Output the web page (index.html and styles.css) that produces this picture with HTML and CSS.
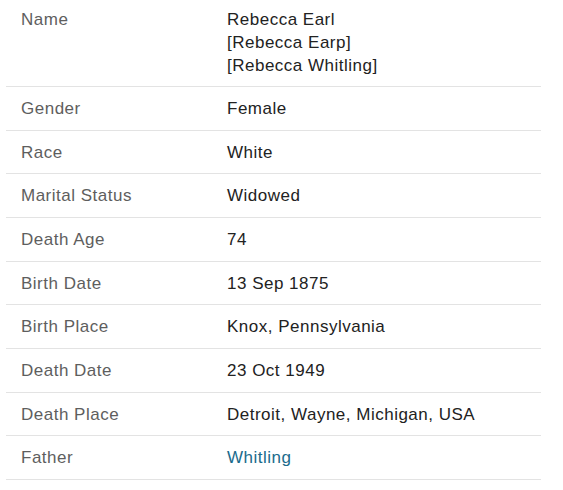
FILE: index.html
```html
<!DOCTYPE html>
<html>
<head>
<meta charset="utf-8">
<link rel="stylesheet" href="styles.css">
</head>
<body>
<div class="record">
  <div class="row row-first">
    <div class="label">Name</div>
    <div class="value">Rebecca Earl<br>[Rebecca Earp]<br>[Rebecca Whitling]</div>
  </div>
  <div class="row"><div class="label">Gender</div><div class="value">Female</div></div>
  <div class="row"><div class="label">Race</div><div class="value">White</div></div>
  <div class="row"><div class="label">Marital Status</div><div class="value">Widowed</div></div>
  <div class="row"><div class="label">Death Age</div><div class="value">74</div></div>
  <div class="row"><div class="label">Birth Date</div><div class="value">13 Sep 1875</div></div>
  <div class="row"><div class="label">Birth Place</div><div class="value">Knox, Pennsylvania</div></div>
  <div class="row"><div class="label">Death Date</div><div class="value">23 Oct 1949</div></div>
  <div class="row"><div class="label">Death Place</div><div class="value">Detroit, Wayne, Michigan, USA</div></div>
  <div class="row"><div class="label">Father</div><div class="value"><a class="link" href="#">Whitling</a></div></div>
</div>
</body>
</html>
```
FILE: styles.css
```css
html, body {
  margin: 0;
  padding: 0;
  background: #ffffff;
}
body {
  font-family: "Liberation Sans", Arial, sans-serif;
  font-size: 17px;
  letter-spacing: 0.5px;
}
.record {
  width: 535px;
  margin-left: 6px;
}
.row {
  display: flex;
  padding: 10px 0 9.67px;
  line-height: 23px;
  border-bottom: 1px solid #e3e3e3;
}
.row-first {
  padding-top: 7.5px;
  padding-bottom: 9.5px;
}
.label {
  width: 206px;
  padding-left: 15px;
  flex: none;
  color: #5e5e5e;
}
.value {
  color: #222222;
}
.link {
  color: #1a6b8c;
  text-decoration: none;
}
```
